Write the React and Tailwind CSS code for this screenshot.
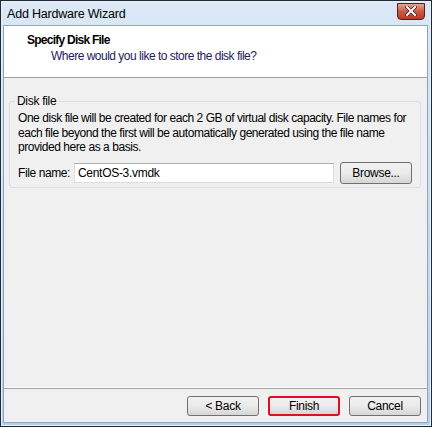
import React from "react";

const font = { fontFamily: '"Liberation Sans", Arial, sans-serif' };

const WinButton = ({ children, focused, className = "" }) => (
  <div
    className={`flex items-center justify-center rounded-[3px] border text-[12px] tracking-[-0.3px] text-black bg-gradient-to-b from-[#f2f2f2] via-[#ebebeb] to-[#d6d6d6] ${
      focused ? "border-2 border-[#e0101c]" : "border-[#707070]"
    } ${className}`}
  >
    {children}
  </div>
);

export default function App() {
  return (
    <div className="w-[432px] h-[427px] bg-[#1f2a36] p-px" style={font}>
      <div className="w-full h-full flex flex-col bg-gradient-to-b from-[#dbe8f6] to-[#b7cfeb] border border-[#e9f0f8]">
        <div className="h-[23px] flex items-center justify-between pl-[5px] pr-[5px]">
          <span className="text-[12.5px] tracking-[-0.2px] text-black mt-[2px]">Add Hardware Wizard</span>
          <div className="w-[28px] h-[17px] -mt-[5px] rounded-b-[4px] border border-[#5c1d16] bg-gradient-to-b from-[#e8a493] via-[#c75a46] to-[#b33c28] flex items-center justify-center">
            <svg width="12" height="10" viewBox="0 0 12 10">
              <path d="M2 1 L10 9 M10 1 L2 9" stroke="#4a1510" strokeWidth="3.4" strokeLinecap="square" />
              <path d="M2 1 L10 9 M10 1 L2 9" stroke="#ffffff" strokeWidth="2" strokeLinecap="square" />
            </svg>
          </div>
        </div>
        <div className="flex-1 ml-px mr-[2px] mb-[2px] flex flex-col bg-[#f0f0f0] border border-[#8aa6c6]">
          <div className="h-[52px] bg-white border-b border-[#a0a0a0] flex flex-col pl-[23px] pt-[7px]">
            <div className="text-[12px] font-bold text-black leading-[15px] tracking-[-0.75px]">Specify Disk File</div>
            <div className="text-[12px] text-[#1e2060] leading-[15px] mt-px pl-[24px] tracking-[-0.5px]">
              Where would you like to store the disk file?
            </div>
          </div>
          <div className="flex-1 px-[5px] pt-[23px]">
            <div className="relative border border-[#d5dfe5] rounded-[3px] h-[87px] pl-[8px] pr-[8px] pt-[9px] mr-[1px]">
              <span className="absolute -top-[8px] left-[5px] px-[2px] bg-[#f0f0f0] text-[12px] leading-[15px] tracking-[-0.3px] text-black">
                Disk file
              </span>
              <p className="text-[12px] leading-[14.5px] text-black tracking-[-0.45px]">
                One disk file will be created for each 2 GB of virtual disk capacity. File names for each file beyond the first will be automatically generated using the file name provided here as a basis.
              </p>
              <div className="flex items-center mt-[7px]">
                <span className="text-[12px] text-black w-[56px] tracking-[-0.4px]">File name:</span>
                <div className="w-[260px] h-[20px] bg-white border border-[#dcdcdc] border-t-[#abadb3] flex items-center pl-[3px] text-[12px] tracking-[-0.3px] text-black">
                  CentOS-3.vmdk
                </div>
                <WinButton className="ml-[6px] w-[72px] h-[22px]">Browse...</WinButton>
              </div>
            </div>
          </div>
          <div className="h-[34px] border-t border-[#a0a0a0] flex items-start justify-end pt-[7px] pr-[6px] gap-[9px] relative">
            <div className="absolute -top-[2px] left-0 right-0 h-px bg-white" />
            <WinButton className="w-[72px] h-[20px]">&lt; Back</WinButton>
            <WinButton focused className="w-[72px] h-[20px]">Finish</WinButton>
            <WinButton className="w-[72px] h-[20px]">Cancel</WinButton>
          </div>
        </div>
      </div>
    </div>
  );
}
